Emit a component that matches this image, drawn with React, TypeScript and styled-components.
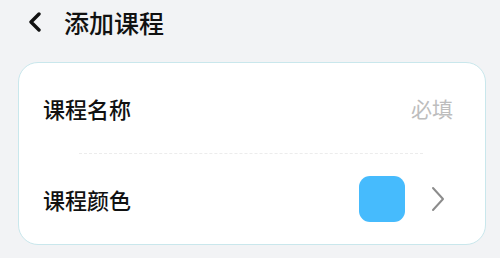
import React from "react";
import styled, { createGlobalStyle } from "styled-components";

const Global = createGlobalStyle`
  html, body { margin: 0; padding: 0; background: #f2f3f5; }
  body { font-family: "Noto Sans CJK SC", "Noto Sans", sans-serif; }
  #root { width: 500px; height: 258px; overflow: hidden; }
`;

const Page = styled.div`
  width: 500px;
  height: 258px;
  background: #f2f3f5;
  display: flex;
  flex-direction: column;
`;

const Header = styled.div`
  height: 44px;
  display: flex;
  align-items: center;
  padding-left: 27px;
  gap: 21px;
  box-sizing: border-box;
`;

const BackIcon = styled.svg`
  width: 16px;
  height: 20px;
  display: block;
`;

const Title = styled.h1`
  margin: 0;
  font-size: 25px;
  font-weight: 500;
  color: #111;
  line-height: 1;
  letter-spacing: 0;
`;

const Card = styled.div`
  margin: 18px 14px 0 18px;
  height: 183px;
  box-sizing: border-box;
  background: #fff;
  border: 1px solid #c9e7ec;
  border-radius: 20px;
  display: flex;
  flex-direction: column;
`;

const Row = styled.div<{ $right: number }>`
  flex: 1;
  display: flex;
  align-items: center;
  justify-content: space-between;
  padding: 0 ${(p) => p.$right}px 0 24px;
`;

const Label = styled.span`
  font-size: 22px;
  font-weight: 500;
  color: #111;
  line-height: 1;
`;

const Placeholder = styled.span`
  font-size: 21px;
  color: #bdbdbd;
  line-height: 1;
`;

const Divider = styled.div`
  margin: 0 62px 0 60px;
  border-top: 1px dashed #ececec;
`;

const Right = styled.div`
  display: flex;
  align-items: center;
  gap: 26px;
`;

const Swatch = styled.div<{ $color: string }>`
  width: 46px;
  height: 46px;
  border-radius: 11px;
  background: ${(p) => p.$color};
`;

const ChevronIcon = styled.svg`
  width: 14px;
  height: 26px;
  display: block;
`;

export default function App() {
  return (
    <>
      <Global />
      <Page>
        <Header>
          <BackIcon viewBox="0 0 16 20">
            <path d="M12 2 L4 10 L12 18" fill="none" stroke="#111" strokeWidth="3.4" strokeLinecap="round" strokeLinejoin="round" />
          </BackIcon>
          <Title>添加课程</Title>
        </Header>
        <Card>
          <Row $right={32}>
            <Label>课程名称</Label>
            <Placeholder>必填</Placeholder>
          </Row>
          <Divider />
          <Row $right={40}>
            <Label>课程颜色</Label>
            <Right>
              <Swatch $color="#46bbfd" />
              <ChevronIcon viewBox="0 0 14 26">
                <path d="M2 2 L12 13 L2 24" fill="none" stroke="#8c8c8c" strokeWidth="2" strokeLinecap="round" strokeLinejoin="round" />
              </ChevronIcon>
            </Right>
          </Row>
        </Card>
      </Page>
    </>
  );
}
